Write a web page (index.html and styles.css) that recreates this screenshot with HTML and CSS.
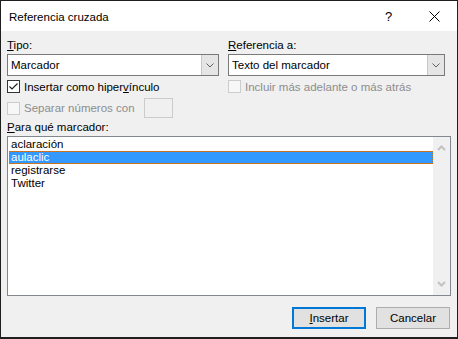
FILE: index.html
```html
<!DOCTYPE html>
<html lang="es">
<head>
  <meta charset="UTF-8">
  <title>Referencia cruzada</title>
  <link rel="stylesheet" href="styles.css">
</head>
<body>

  <div class="window">
    <div class="titlebar">
      <span class="title">Referencia cruzada</span>
      <span class="help">?</span>
      <span class="close">
        <svg width="11" height="11" viewBox="0 0 11 11"><path d="M0.5 0.5 L10.5 10.5 M10.5 0.5 L0.5 10.5" stroke="#000" stroke-width="1" fill="none"/></svg>
      </span>
    </div>

    <div class="content">
      <div class="columns">
        <div class="col">
          <div class="label"><u>T</u>ipo:</div>
          <div class="combo">
            <span class="combo-text">Marcador</span>
            <span class="combo-btn">
              <svg width="8" height="5" viewBox="0 0 8 5"><path d="M0.5 0.5 L4 4 L7.5 0.5" stroke="#606060" stroke-width="1" fill="none"/></svg>
            </span>
          </div>
          <label class="check">
            <span class="box checked">
              <svg width="11" height="11" viewBox="0 0 11 11"><path d="M1.5 5.5 L4 8 L9.5 2.5" stroke="#222" stroke-width="1.2" fill="none"/></svg>
            </span>
            <span>Insertar como hiper<u>v</u>ínculo</span>
          </label>
          <label class="check disabled tall">
            <span class="box"></span>
            <span>Separar números con</span>
            <span class="num-input"></span>
          </label>
        </div>

        <div class="col">
          <div class="label"><u>R</u>eferencia a:</div>
          <div class="combo">
            <span class="combo-text">Texto del marcador</span>
            <span class="combo-btn">
              <svg width="8" height="5" viewBox="0 0 8 5"><path d="M0.5 0.5 L4 4 L7.5 0.5" stroke="#606060" stroke-width="1" fill="none"/></svg>
            </span>
          </div>
          <label class="check disabled">
            <span class="box"></span>
            <span>Incluir más adelante o más atrás</span>
          </label>
        </div>
      </div>

      <div class="label list-label"><u>P</u>ara qué marcador:</div>
      <div class="listbox">
        <ul class="items">
          <li>aclaración</li>
          <li class="selected">aulaclic</li>
          <li>registrarse</li>
          <li>Twitter</li>
        </ul>
        <div class="scrollbar">
          <svg width="9" height="6" viewBox="0 0 9 6"><path d="M1 5 L4.5 1.5 L8 5" stroke="#c2c2c2" stroke-width="2" fill="none"/></svg>
          <svg width="9" height="6" viewBox="0 0 9 6"><path d="M1 1 L4.5 4.5 L8 1" stroke="#c2c2c2" stroke-width="2" fill="none"/></svg>
        </div>
      </div>

      <div class="actions">
        <button class="btn btn-default"><u>I</u>nsertar</button>
        <button class="btn">Cancelar</button>
      </div>
    </div>
  </div>

</body>
</html>
```

FILE: styles.css
```css
* { margin: 0; padding: 0; box-sizing: border-box; }
body {
  font-family: 'Liberation Sans', Arial, sans-serif;
  font-size: 11.5px;
  color: #000;
  background: #fff;
}
.window {
  width: 458px;
  height: 339px;
  border: 1px solid #1f1f1f;
  border-bottom-width: 2px;
  display: flex;
  flex-direction: column;
  background: #f0f0f0;
}
.titlebar {
  height: 30px;
  background: #fff;
  display: flex;
  align-items: center;
  padding-left: 8px;
}
.title {
  flex: 1;
  font-size: 11.5px;
  margin-top: 1px;
}
.help {
  width: 14px;
  font-size: 13px;
  margin-right: 30px;
}
.close {
  display: flex;
  margin-right: 17px;
}
.content {
  flex: 1;
  padding: 6px 6px 0 6px;
}
.columns {
  display: grid;
  grid-template-columns: 212px 217px;
  column-gap: 9px;
}
.label {
  height: 16px;
  line-height: 16px;
  margin-bottom: 1px;
}
.combo {
  height: 22px;
  border: 1px solid #7a7a7a;
  background: #fff;
  display: flex;
}
.combo-text {
  flex: 1;
  line-height: 20px;
  padding-left: 3px;
}
.combo-btn {
  width: 17px;
  background: #e5e5e5;
  border-left: 1px solid #c8c8c8;
  display: flex;
  align-items: center;
  justify-content: center;
}
.check {
  display: flex;
  align-items: center;
  gap: 4px;
  height: 13px;
  margin-top: 4px;
}
.check.tall {
  height: 20px;
  margin-top: 5px;
}
.box {
  width: 13px;
  height: 13px;
  border: 1px solid #333;
  background: #fff;
  display: flex;
  align-items: center;
  justify-content: center;
}
.disabled {
  color: #8d8d8d;
}
.disabled .box {
  border-color: #cccccc;
  background: #f7f7f7;
}
.num-input {
  width: 29px;
  height: 20px;
  border: 1px solid #cccccc;
  background: #f0f0f0;
  margin-left: 5px;
}
.list-label {
  margin-top: 1px;
}
.listbox {
  height: 160px;
  margin-top: 1px;
  width: 444px;
  border: 1px solid #828790;
  background: #fff;
  display: flex;
}
.items {
  flex: 1;
  list-style: none;
  padding: 1px 0 0 1px;
}
.items li {
  height: 13px;
  line-height: 13px;
  padding-left: 2px;
}
.items li.selected {
  background: #3399ff;
  color: #fff;
  outline: 1px dotted #c8701e;
  outline-offset: -1px;
}
.scrollbar {
  width: 17px;
  background: #f0f0f0;
  display: flex;
  flex-direction: column;
  justify-content: space-between;
  align-items: center;
  padding: 8px 0 8px;
}
.actions {
  display: flex;
  justify-content: flex-end;
  gap: 10px;
  margin-top: 11px;
  padding-right: 1px;
}
.btn {
  width: 74px;
  height: 22px;
  font-family: inherit;
  font-size: 11.5px;
  background: #e1e1e1;
  border: 1px solid #adadad;
  color: #000;
}
.btn-default {
  border: 2px solid #0078d7;
}
```
